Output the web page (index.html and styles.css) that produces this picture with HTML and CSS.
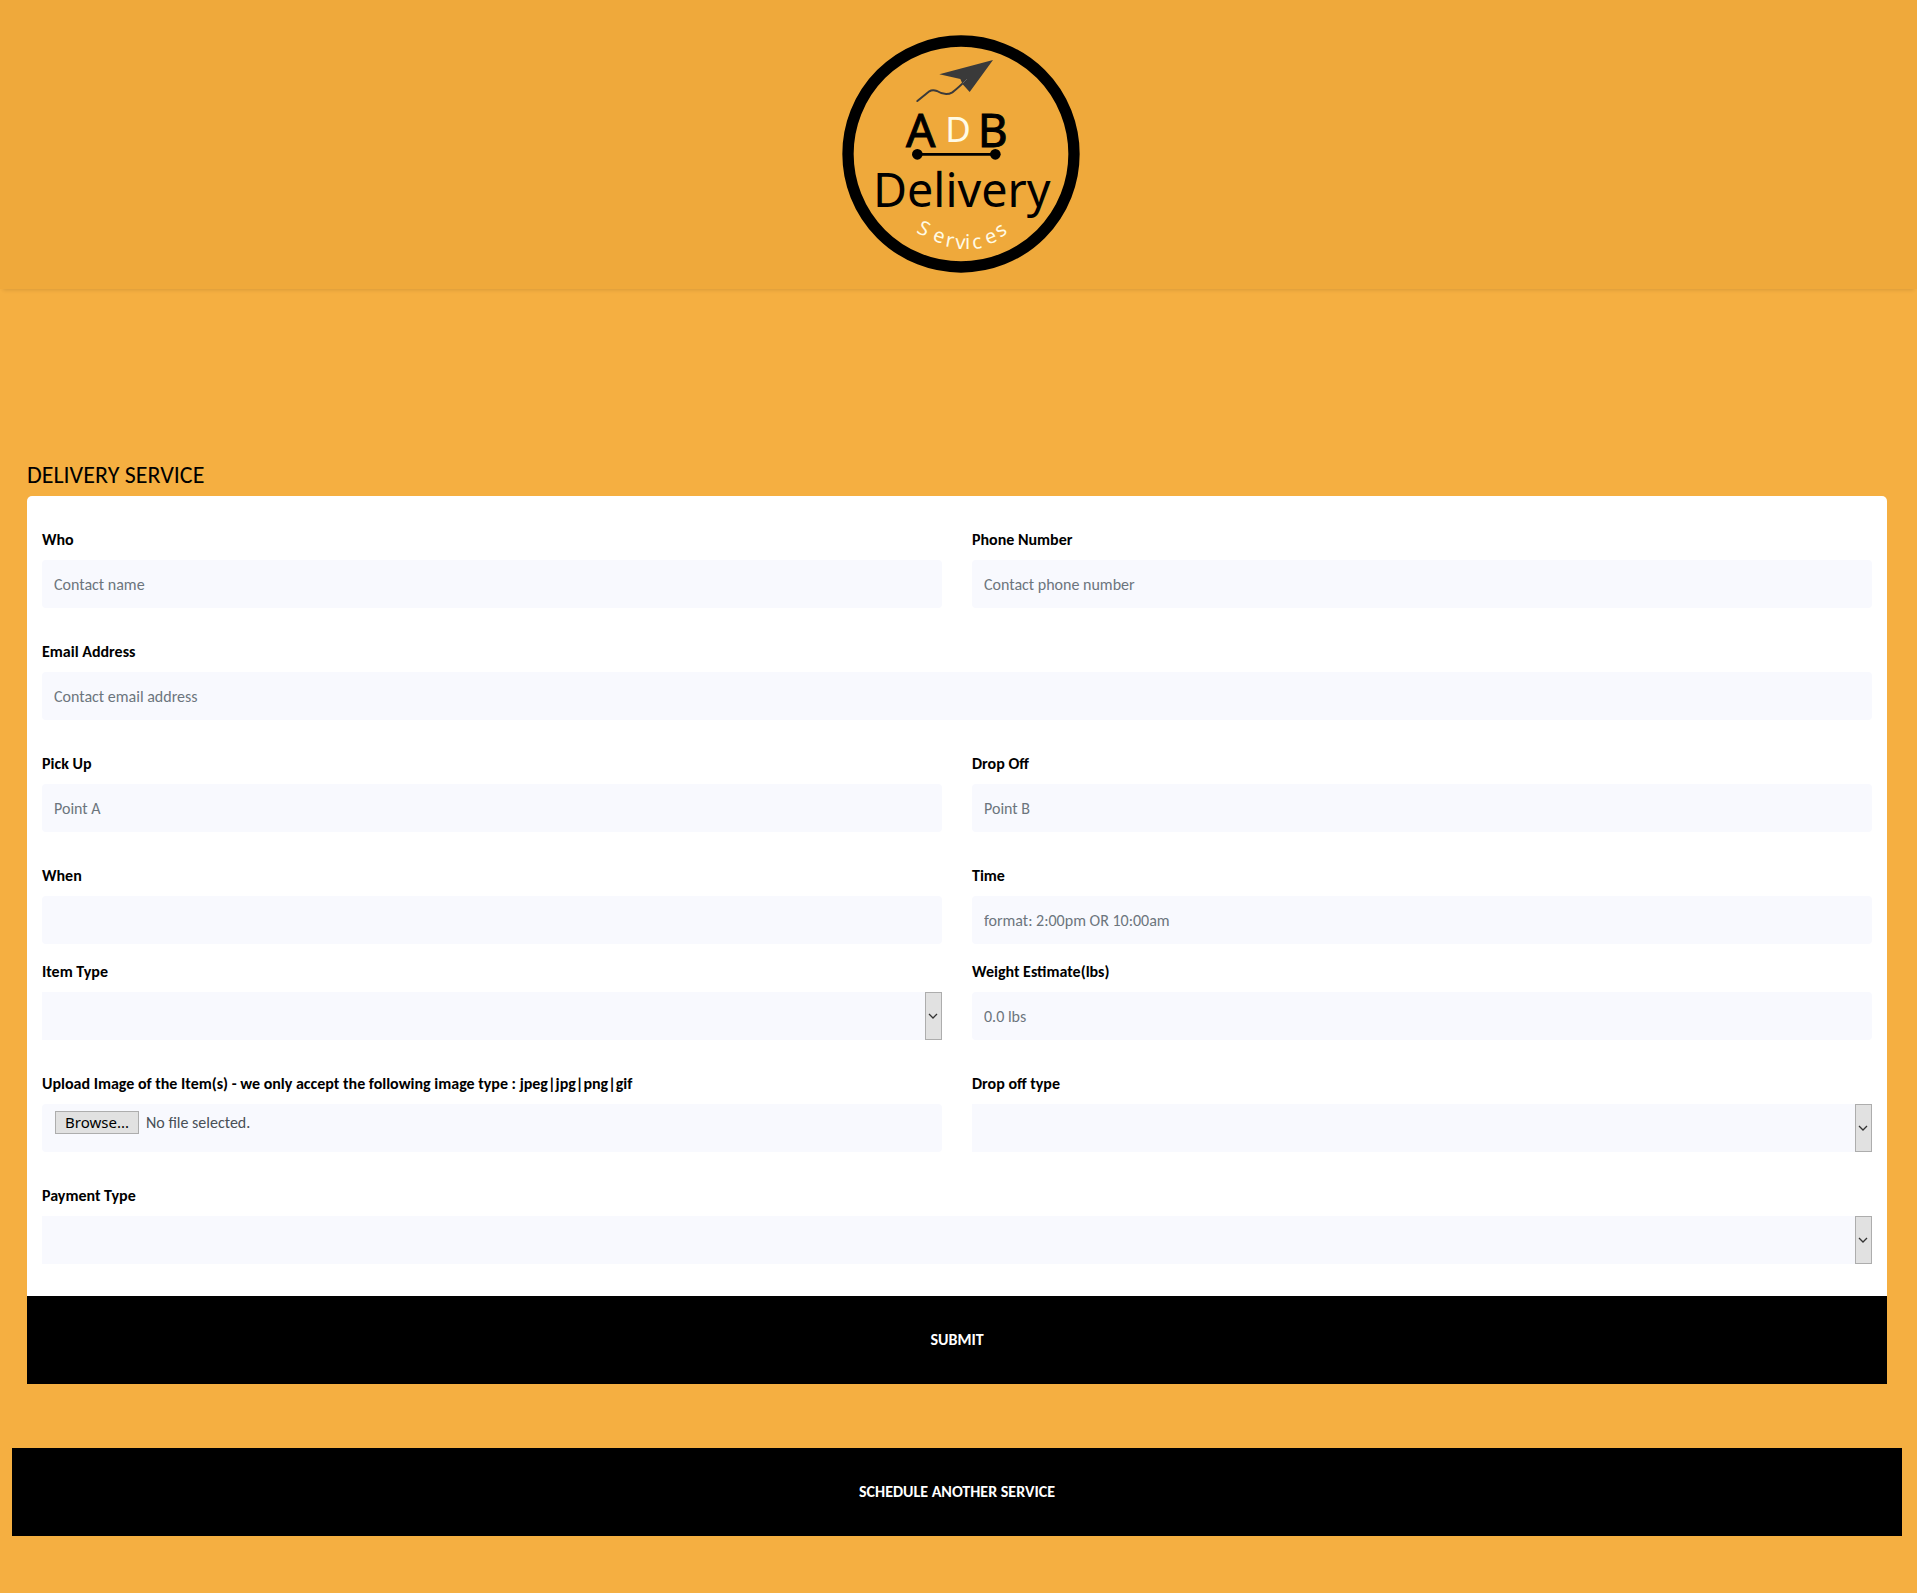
FILE: index.html
```html
<!DOCTYPE html>
<html lang="en">
<head>
<meta charset="utf-8">
<meta name="viewport" content="width=device-width, initial-scale=1">
<title>ADB Delivery Services</title>
<link rel="stylesheet" href="styles.css">
</head>
<body>
<header class="site-header">
  <svg class="logo" viewBox="-4 0 840 807" role="img" aria-label="ADB Delivery Services">
    <circle cx="422" cy="402" r="339" fill="none" stroke="#000" stroke-width="34"/>
    <path d="M518 120 L357 163 L420 177 L427 193 L448 216 Z" fill="#3a3a3a"/>
    <path d="M291 243 L327 214 Q336 208 350 213 Q375 229 396 217 Q415 203 438 179" fill="none" stroke="#3a3a3a" stroke-width="6" stroke-linecap="round"/>
    <path d="M427 190 L440 177" stroke="#777" stroke-width="2"/>
    <text class="logo-text logo-heavy" x="257" y="382" font-size="138">A</text>
    <text class="logo-text logo-light" x="375" y="367" font-size="105">D</text>
    <text class="logo-text logo-heavy" x="472" y="382" font-size="138">B</text>
    <path d="M291 403 H525" stroke="#000" stroke-width="8"/>
    <circle cx="291" cy="403" r="16"/>
    <circle cx="525" cy="403" r="16"/>
    <text class="logo-text" x="158" y="561" font-size="140">Delivery</text>
    <text class="logo-text logo-light" font-size="60" x="286 334 373 404 434 458 502 540" y="636 661 679 686 688 688 675 654" rotate="28 19 10 3 0 -8 -22 -34">Services</text>
  </svg>
</header>
<main class="page">
  <section class="service">
    <h1 class="service-title">DELIVERY SERVICE</h1>
    <form class="card">
      <div class="fields">
        <div class="field">
          <label for="who">Who</label>
          <input class="control" id="who" type="text" placeholder="Contact name">
        </div>
        <div class="field">
          <label for="phone">Phone Number</label>
          <input class="control" id="phone" type="tel" placeholder="Contact phone number">
        </div>
        <div class="field field-wide">
          <label for="email">Email Address</label>
          <input class="control" id="email" type="email" placeholder="Contact email address">
        </div>
        <div class="field">
          <label for="pickup">Pick Up</label>
          <input class="control" id="pickup" type="text" placeholder="Point A">
        </div>
        <div class="field">
          <label for="dropoff">Drop Off</label>
          <input class="control" id="dropoff" type="text" placeholder="Point B">
        </div>
        <div class="field field-tight">
          <label for="when">When</label>
          <input class="control" id="when" type="text">
        </div>
        <div class="field field-tight">
          <label for="time">Time</label>
          <input class="control" id="time" type="text" placeholder="format: 2:00pm OR 10:00am">
        </div>
        <div class="field">
          <label for="item">Item Type</label>
          <div class="select">
            <select class="control" id="item"><option></option><option>Package</option></select>
            <svg class="arrow" viewBox="0 0 17 48" aria-hidden="true"><rect x=".5" y=".5" width="16" height="47"/><path d="M4 22 L8 26 L12 22"/></svg>
          </div>
        </div>
        <div class="field">
          <label for="weight">Weight Estimate(lbs)</label>
          <input class="control" id="weight" type="text" placeholder="0.0 lbs">
        </div>
        <div class="field">
          <label for="image">Upload Image of the Item(s) - we only accept the following image type : jpeg|jpg|png|gif</label>
          <div class="control upload">
            <button class="browse" type="button" tabindex="-1">Browse...</button>
            <span>No file selected.</span>
            <input class="upload-input" id="image" type="file" accept=".jpeg,.jpg,.png,.gif">
          </div>
        </div>
        <div class="field">
          <label for="droptype">Drop off type</label>
          <div class="select">
            <select class="control" id="droptype"><option></option><option>In person</option></select>
            <svg class="arrow" viewBox="0 0 17 48" aria-hidden="true"><rect x=".5" y=".5" width="16" height="47"/><path d="M4 22 L8 26 L12 22"/></svg>
          </div>
        </div>
        <div class="field field-wide">
          <label for="payment">Payment Type</label>
          <div class="select">
            <select class="control" id="payment"><option></option><option>Card</option></select>
            <svg class="arrow" viewBox="0 0 17 48" aria-hidden="true"><rect x=".5" y=".5" width="16" height="47"/><path d="M4 22 L8 26 L12 22"/></svg>
          </div>
        </div>
      </div>
      <button class="bar" type="submit">SUBMIT</button>
    </form>
  </section>
  <button class="bar" type="button">SCHEDULE ANOTHER SERVICE</button>
</main>
</body>
</html>
```
FILE: styles.css
```css
* {
  box-sizing: border-box;
}

body {
  margin: 0;
  background: #f5af41;
  color: #000;
  font: 16px/24px Carlito, Lato, sans-serif;
}

.site-header {
  display: flex;
  justify-content: center;
  padding-top: 20px;
  background: #efa93b;
  box-shadow: 0 4px 4px -3px rgba(0, 0, 0, 0.12);
}

.logo {
  display: block;
  width: 280px;
  height: 269px;
}

.logo-text {
  font-family: "Noto Sans", sans-serif;
  fill: #000;
}

.logo-heavy {
  stroke: #000;
  stroke-width: 3px;
}

.logo-light {
  fill: #fffbe6;
}

.page {
  padding: 170px 15px 56px 12px;
}

.service {
  padding: 0 15px;
  margin-bottom: 64px;
}

.service-title {
  margin: 0 0 5px;
  font-size: 24px;
  line-height: 32px;
  font-weight: 400;
}

.card {
  background: #fff;
  border-radius: 5px 5px 0 0;
}

.fields {
  display: grid;
  grid-template-columns: 1fr 1fr;
  column-gap: 30px;
  padding: 32px 15px 0;
}

.field {
  display: flex;
  flex-direction: column;
  gap: 8px;
  padding-bottom: 32px;
}

.field-wide {
  grid-column: 1 / -1;
}

.field-tight {
  padding-bottom: 16px;
}

.field label {
  font-weight: 700;
}

.control {
  width: 100%;
  height: 48px;
  padding: 0 12px;
  border: 0;
  border-radius: 4px;
  background: #f8f9fe;
  color: #495057;
  font: inherit;
}

.control::placeholder {
  color: #6c757d;
  opacity: 1;
}

.select {
  display: grid;
}

.select .control,
.arrow {
  grid-area: 1 / 1;
}

.select .control {
  appearance: none;
  border-radius: 0;
}

.arrow {
  justify-self: end;
  width: 17px;
  height: 48px;
  pointer-events: none;
}

.arrow rect {
  fill: #e1e1e1;
  stroke: #adadad;
}

.arrow path {
  fill: none;
  stroke: #333;
  stroke-width: 1.3;
}

.upload {
  position: relative;
  display: flex;
  align-items: flex-start;
  gap: 7px;
  padding: 7px 13px;
}

.browse {
  width: 84px;
  height: 23px;
  padding: 0;
  border: 1px solid #adadad;
  background: #e1e1e1;
  color: #000;
  font: 15px/21px "Noto Sans", sans-serif;
}

.upload-input {
  position: absolute;
  inset: 0;
  width: 100%;
  opacity: 0;
}

.bar {
  display: block;
  width: 100%;
  height: 88px;
  border: 0;
  background: #000;
  color: #fff;
  font: inherit;
  font-weight: 700;
}
```
